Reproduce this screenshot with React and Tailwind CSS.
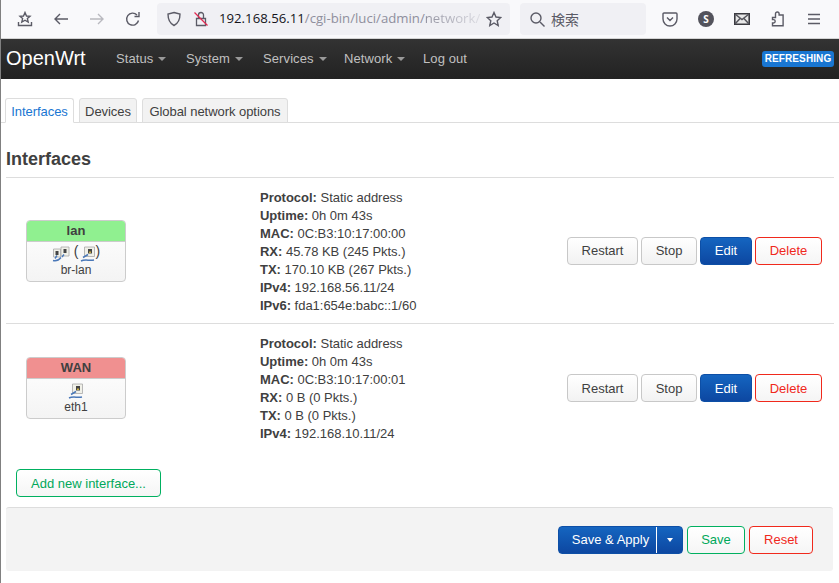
const sans = "font-['Liberation_Sans',Arial,sans-serif]";

function Caret() {
  return <span className="ml-[5px] inline-block h-0 w-0 border-x-[4px] border-t-[4px] border-x-transparent border-t-[#999] align-middle" />;
}

function NavItem({ label, width, caret = true }) {
  return (
    <span className="-mt-[1px] flex items-center text-[13px] tracking-[0.1px] text-[#c0c0c0]" style={{ width }}>
      {label}
      {caret && <Caret />}
    </span>
  );
}

function Btn({ kind = "plain", className = "", children }) {
  const kinds = {
    plain: "border-[#c8c8c8] bg-gradient-to-b from-white to-[#f2f2f2] text-[#404040]",
    blue: "border-[#0d4fa6] bg-gradient-to-b from-[#1565c0] to-[#0d47a1] text-white",
    green: "border-[#00b060] bg-gradient-to-b from-white to-[#f5f5f5] text-[#00a85a]",
    red: "border-[#f0291c] bg-gradient-to-b from-white to-[#f5f5f5] text-[#f0291c]",
  };
  return (
    <button type="button" className={`flex h-[28px] items-center justify-center rounded-[4px] border pt-[1px] text-[13px] ${kinds[kind]} ${className}`}>
      {children}
    </button>
  );
}

function Tab({ width, active, children }) {
  const look = active ? "border-b-white bg-white text-[#1976d2]" : "bg-[#f2f2f2] text-[#404040]";
  return (
    <span className={`-mb-px flex h-[25px] items-center justify-center rounded-t-[3px] border border-[#ddd] pt-[3px] tracking-[-0.05px] ${look}`} style={{ width }}>
      {children}
    </span>
  );
}

function PortIcon() {
  return (
    <svg width="16" height="16" viewBox="0 0 16 16">
      <path d="M4.500 1h10v9.500h-10z" fill="#f0f0e8" stroke="#a8a8a8" strokeWidth="0.8" />
      <path d="M8 3h4v4.500H8z" fill="#444" />
      <path d="M9 5.500h2V7H9z" fill="#c8b040" />
      <path d="M8 8.500 3 11.500M1 15c4-2 8 0 13-1" fill="none" stroke="#4a78b8" strokeWidth="1.500" />
    </svg>
  );
}

function BridgeIcon() {
  return (
    <svg width="18" height="16" viewBox="0 0 18 16">
      <path d="M9 1h8v9H9z" fill="#f0f0e8" stroke="#a8a8a8" strokeWidth="0.8" />
      <path d="M11.500 3h3v4h-3z" fill="#444" />
      <path d="M1.500 3h7v8h-7z" fill="#f0f0e8" stroke="#a8a8a8" strokeWidth="0.8" />
      <path d="M3.500 5h3v4h-3z" fill="#444" />
      <path d="M12 8.500 10 11M5 9.500 3 12.500M1 14.500c3 .8 6-.5 8-3" fill="none" stroke="#4a78b8" strokeWidth="1.400" />
    </svg>
  );
}

function Badge({ name, color, children, label }) {
  return (
    <div className="w-[100px] overflow-hidden rounded-[4px] border border-[#ccc] bg-gradient-to-b from-white to-[#f4f4f4] text-center">
      <div className="h-[21px] border-b border-[#ccc] text-[13px] leading-[20px] font-bold text-[#404040]" style={{ backgroundColor: color }}>
        {name}
      </div>
      <div className="flex h-[20px] items-end justify-center text-[14px]">{children}</div>
      <div className="h-[19px] text-[12px] leading-[16px] text-[#404040]">{label}</div>
    </div>
  );
}

function Info({ rows, className = "pt-[1px]" }) {
  return (
    <div className={`text-[13px] leading-[18px] tracking-[-0.02px] text-[#404040] ${className}`}>
      {rows.map(([k, v]) => (
        <div key={k}>
          <b>{k}:</b> {v}
        </div>
      ))}
    </div>
  );
}

function Actions() {
  return (
    <div className="ml-auto flex gap-[3px] pr-[12px]">
      <Btn className="w-[71px]">Restart</Btn>
      <Btn className="w-[56px]">Stop</Btn>
      <Btn kind="blue" className="w-[52px]">Edit</Btn>
      <Btn kind="red" className="w-[67px]">Delete</Btn>
    </div>
  );
}

function Toolbar() {
  const stroke = { fill: "none", stroke: "#5b5b66", strokeWidth: 1.4 };
  return (
    <div className="flex h-[39px] shrink-0 items-center border-b border-[#d4d4d4] bg-[#f9f9fb] font-['Open_Sans',sans-serif]">
      <div className="flex w-[156px] items-center gap-[20px] pl-[16px]">
        <svg width="16" height="16" viewBox="0 0 16 16" {...stroke}>
          <path d="M8 1.500 9.500 5l3.500.3-2.600 2.300.8 3.400L8 9.200 4.800 11l.8-3.400L3 5.300 6.500 5z" />
          <path d="M1.500 11v3.500h13V11" />
        </svg>
        <svg width="16" height="16" viewBox="0 0 16 16" {...stroke}><path d="M15 8H2M7 3 2 8l5 5" /></svg>
        <svg width="16" height="16" viewBox="0 0 16 16" fill="none" stroke="#b9b9bf" strokeWidth="1.4"><path d="M1 8h13M9 3l5 5-5 5" /></svg>
        <svg width="16" height="16" viewBox="0 0 16 16" {...stroke}><path d="M13.500 9.500A6 6 0 1 1 12 4M14 1v4.500H9.500" /></svg>
      </div>
      <div className="flex h-[32px] w-[353px] items-center rounded-[4px] bg-[#f0f0f4] pl-[9px]">
        <svg width="16" height="16" viewBox="0 0 16 16" {...stroke}><path d="M8 1.500 14 3c0 6-2 9.500-6 11.500C4 12.500 2 9 2 3z" /></svg>
        <svg className="ml-[11px]" width="16" height="16" viewBox="0 0 16 16" fill="none" strokeWidth="1.3">
          <path d="M3.500 7.500h9v7h-9zM5.500 7.500V4a2.500 2.500 0 0 1 5 0v3.500" stroke="#5b5b66" />
          <path d="M1.500 1.500l13 13" stroke="#e22850" />
        </svg>
        <div className="ml-[10px] w-[267px] text-[13.2px] whitespace-nowrap text-[#8f8f9d]">
          <span className="text-[#15141a]">192.168.56.11</span>/cgi-bin/luci/admin/
          <span className="bg-gradient-to-r from-[#8f8f9d] to-[#dcdce2] bg-clip-text text-transparent">network/</span>
        </div>
        <svg width="16" height="16" viewBox="0 0 16 16" {...stroke}>
          <path d="M8 1.500 10 6l4.800.5-3.600 3.200 1 4.800L8 12l-4.200 2.500 1-4.800L1.200 6.500 6 6z" />
        </svg>
      </div>
      <div className="ml-[10px] flex h-[32px] w-[126px] items-center rounded-[4px] bg-[#f0f0f4] pl-[10px] font-['Noto_Sans_CJK_JP',sans-serif] text-[14px] text-[#5b5b66]">
        <svg width="15" height="15" viewBox="0 0 15 15" {...stroke}><circle cx="6" cy="6" r="5" /><path d="m10 10 4.500 4.500" /></svg>
        <span className="ml-[6px]">検索</span>
      </div>
      <div className="ml-[16px] flex items-center gap-[20px]">
        <svg width="16" height="16" viewBox="0 0 16 16" {...stroke}>
          <path d="M2 2h12a1 1 0 0 1 1 1v5a7 7 0 0 1-14 0V3a1 1 0 0 1 1-1zM5 6.500l3 3 3-3" />
        </svg>
        <span className="flex h-[16px] w-[16px] items-center justify-center rounded-full bg-[#53535c] text-[10px] font-bold text-white">S</span>
        <svg width="16" height="12" viewBox="0 0 16 12">
          <path d="M.8.800h14.400v10.400H.8z" fill="#e8e8e8" stroke="#3a3a40" strokeWidth="1.600" />
          <path d="M1 1l7 5.500L15 1M1 11l5.500-6M15 11 9.500 5" fill="none" stroke="#55555c" strokeWidth="1.500" />
        </svg>
        <svg width="16" height="16" viewBox="0 0 16 16" {...stroke}>
          <path d="M5.500 4V2.800a1.800 1.800 0 0 1 3.600 0V4h4v10.800H2.500V12h1a1.700 1.700 0 0 0 0-3.400h-1V6.500h3z" />
        </svg>
        <svg width="16" height="16" viewBox="0 0 16 16" {...stroke}><path d="M2 3.500h12M2 8h12M2 12.500h12" /></svg>
      </div>
    </div>
  );
}

export default function App() {
  return (
    <div className={`flex h-[583px] w-[839px] flex-col overflow-hidden border-l border-[#808080] bg-white ${sans}`}>
      <Toolbar />
      <div className="flex h-[40px] shrink-0 items-center bg-gradient-to-b from-[#333] to-[#222] pr-[5px] pl-[5px]">
        <span className="-mt-[2px] w-[110px] text-[20px] text-white">OpenWrt</span>
        <NavItem label="Status" width={70} />
        <NavItem label="System" width={77} />
        <NavItem label="Services" width={81} />
        <NavItem label="Network" width={79} />
        <NavItem label="Log out" width={60} caret={false} />
        <span className="ml-auto w-[72px] rounded-[3px] bg-[#1976d2] text-center text-[10px] leading-[16px] font-bold tracking-[0.1px] text-white">REFRESHING</span>
      </div>

      <div className="flex h-[44px] shrink-0 items-end gap-[5px] border-b border-[#ddd] pl-[4px] text-[13px]">
        <Tab width={69} active>Interfaces</Tab>
        <Tab width={58}>Devices</Tab>
        <Tab width={146}>Global network options</Tab>
      </div>

      <div className="px-[5px]">
        <h3 className="flex h-[54px] items-center pt-[18px] text-[18px] font-bold text-[#404040]">Interfaces</h3>
        <div className="flex h-[147px] items-center border-y border-[#ddd]">
          <div className="ml-[20px] w-[234px]">
            <Badge name="lan" color="#90f090" label="br-lan">
              <BridgeIcon />
              <span className="mr-[1px] ml-[4px] text-[#404040]">(</span>
              <PortIcon />
              <span className="text-[#404040]">)</span>
            </Badge>
          </div>
          <Info
            className="pt-[2px]"
            rows={[
              ["Protocol", "Static address"],
              ["Uptime", "0h 0m 43s"],
              ["MAC", "0C:B3:10:17:00:00"],
              ["RX", "45.78 KB (245 Pkts.)"],
              ["TX", "170.10 KB (267 Pkts.)"],
              ["IPv4", "192.168.56.11/24"],
              ["IPv6", "fda1:654e:babc::1/60"],
            ]}
          />
          <Actions />
        </div>
        <div className="flex h-[128px] items-center">
          <div className="ml-[20px] w-[234px]">
            <Badge name="WAN" color="#f09090" label="eth1">
              <PortIcon />
            </Badge>
          </div>
          <Info
            rows={[
              ["Protocol", "Static address"],
              ["Uptime", "0h 0m 43s"],
              ["MAC", "0C:B3:10:17:00:01"],
              ["RX", "0 B (0 Pkts.)"],
              ["TX", "0 B (0 Pkts.)"],
              ["IPv4", "192.168.10.11/24"],
            ]}
          />
          <Actions />
        </div>
        <div className="pt-[17px] pl-[10px]">
          <Btn kind="green" className="w-[145px]">Add new interface...</Btn>
        </div>
        <div className="mt-[10px] flex h-[64px] w-[827px] items-center justify-end gap-[4px] rounded-[3px] border-t border-[#ddd] bg-[#f3f3f3] pr-[20px]">
          <Btn kind="blue" className="w-[125px]">
            <span className="flex-1 pl-[6px]">Save &amp; Apply</span>
            <span className="-mt-[1px] h-[26px] border-l border-white" />
            <span className="flex w-[25px] justify-center"><span className="h-0 w-0 border-x-[3px] border-t-[4px] border-x-transparent border-t-white" /></span>
          </Btn>
          <Btn kind="green" className="w-[58px]">Save</Btn>
          <Btn kind="red" className="w-[64px]">Reset</Btn>
        </div>
      </div>
    </div>
  );
}
